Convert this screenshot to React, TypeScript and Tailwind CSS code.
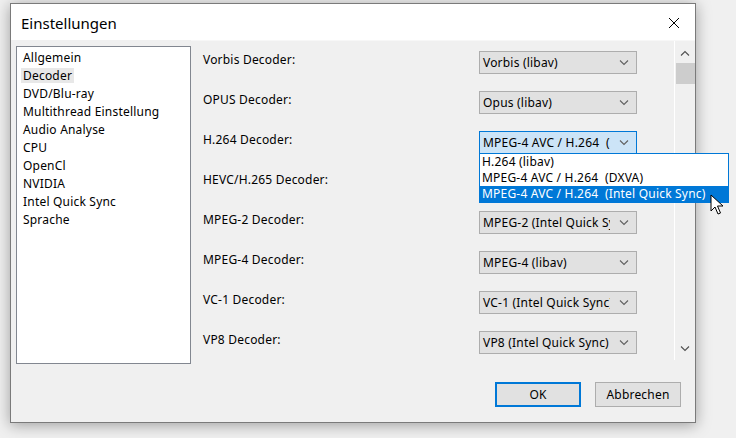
import React from 'react';

const categories = [
  'Allgemein',
  'Decoder',
  'DVD/Blu-ray',
  'Multithread Einstellung',
  'Audio Analyse',
  'CPU',
  'OpenCl',
  'NVIDIA',
  'Intel Quick Sync',
  'Sprache',
];

const decoders = [
  { label: 'Vorbis Decoder:', value: 'Vorbis (libav)' },
  { label: 'OPUS Decoder:', value: 'Opus (libav)' },
  { label: 'H.264 Decoder:', value: 'MPEG-4 AVC / H.264  (Intel Quick Sync)', open: true },
  { label: 'HEVC/H.265 Decoder:', value: 'HEVC (Intel Quick Sync)', hidden: true },
  { label: 'MPEG-2 Decoder:', value: 'MPEG-2 (Intel Quick Sync)' },
  { label: 'MPEG-4 Decoder:', value: 'MPEG-4 (libav)' },
  { label: 'VC-1 Decoder:', value: 'VC-1 (Intel Quick Sync)' },
  { label: 'VP8 Decoder:', value: 'VP8 (Intel Quick Sync)' },
];

const options = ['H.264 (libav)', 'MPEG-4 AVC / H.264  (DXVA)', 'MPEG-4 AVC / H.264  (Intel Quick Sync)'];

const Chevron: React.FC<{ up?: boolean; color?: string }> = ({ up, color = '#606060' }) => (
  <svg width="10" height="6" viewBox="0 0 10 6">
    <path
      d={up ? 'M1 5.5 L5 1.5 L9 5.5' : 'M1 0.5 L5 4.5 L9 0.5'}
      fill="none"
      stroke={color}
      strokeWidth="1.1"
    />
  </svg>
);

const Combo: React.FC<{ value: string; open?: boolean; hidden?: boolean }> = ({ value, open, hidden }) => (
  <div
    className={`relative flex items-center w-[158px] h-[23px] border ${
      open ? 'border-[#0078d7] bg-[#cce4f7]' : 'border-[#adadad] bg-[#e1e1e1]'
    } ${hidden ? 'invisible' : ''}`}
  >
    <div className="w-[130px] pl-[3px] overflow-hidden whitespace-pre leading-[16px]">{value}</div>
    <div className="flex-1 flex justify-center pl-[2px]">
      <Chevron />
    </div>
  </div>
);

const DropList: React.FC = () => (
  <div className="absolute left-[288px] top-[22px] w-[250px] border border-[#0078d7] bg-white z-10">
    {options.map((o, i) => (
      <div
        key={o}
        className={`h-[16px] leading-[16px] pl-[2px] whitespace-pre ${
          i === 2 ? 'bg-[#0078d7] text-white' : 'text-black'
        }`}
      >
        {o}
      </div>
    ))}
    {/* mouse cursor */}
    <svg className="absolute left-[230px] top-[40px]" width="14" height="22" viewBox="0 0 14 22">
      <path d="M1 1 L1 17 L5 13 L8 20 L10.5 19 L7.5 12 L13 12 Z" fill="white" stroke="black" strokeWidth="1" />
    </svg>
  </div>
);

export default function App() {
  return (
    <div
      className="w-[736px] h-[438px] bg-[#f0f0f0] pl-[10px] pt-[3px] text-[12px] text-black tracking-[0.2px]"
      style={{ fontFamily: '"Noto Sans", "Open Sans", sans-serif' }}
    >
      <div className="w-[686px] h-[420px] border border-[#7a7a7a] bg-[#f0f0f0] shadow-[0_2px_14px_rgba(0,0,0,0.35)] flex flex-col">
        {/* Title bar */}
        <div className="h-[36px] bg-white flex items-center justify-between pl-[10px] pr-[14px]">
          <span className="text-[15px] leading-[20px] mt-[2px] tracking-normal">Einstellungen</span>
          <svg width="12" height="12" viewBox="0 0 12 12" className="mt-[2px] mr-[1px]">
            <path d="M1 1 L11 11 M11 1 L1 11" stroke="black" strokeWidth="1" />
          </svg>
        </div>

        {/* Body */}
        <div className="flex h-[324px]">
          <div className="ml-[5px] mt-[6px] w-[175px] h-[318px] border border-[#828790] bg-white pt-[1px] pl-[4px]">
            {categories.map((c) => (
              <div key={c} className="h-[18px] flex items-center">
                <span className={`px-[2px] leading-[15px] ${c === 'Decoder' ? 'bg-[#e8e8e8]' : ''}`}>{c}</span>
              </div>
            ))}
          </div>

          <div className="flex w-[504px] h-[320px] border-t border-[#f7f7f7]">
            <div className="w-[483px] pt-[10px]">
              {decoders.map((d) => (
                <div key={d.label} className="relative flex h-[40px] items-start">
                  <div className="w-[288px] pl-[12px] mt-[1px] leading-[16px]">{d.label}</div>
                  <Combo value={d.value} open={d.open} hidden={d.hidden} />
                  {d.open && <DropList />}
                </div>
              ))}
            </div>
            {/* Scrollbar */}
            <div className="w-[21px] border-l border-white flex flex-col items-center">
              <div className="h-[21px] flex items-center justify-center mt-[1px]">
                <Chevron up color="#505050" />
              </div>
              <div className="w-[19px] h-[21px] bg-[#cdcdcd] ml-[1px]" />
              <div className="flex-1" />
              <div className="h-[21px] flex items-center justify-center mb-[1px]">
                <Chevron color="#505050" />
              </div>
            </div>
          </div>
        </div>

        {/* Buttons */}
        <div className="flex justify-end gap-[14px] pr-[14px] mt-[18px]">
          <button className="w-[86px] h-[25px] border-2 border-[#0078d7] bg-[#e1e1e1] leading-[16px]">OK</button>
          <button className="w-[86px] h-[25px] border border-[#adadad] bg-[#e1e1e1] leading-[16px]">Abbrechen</button>
        </div>
      </div>
    </div>
  );
}
